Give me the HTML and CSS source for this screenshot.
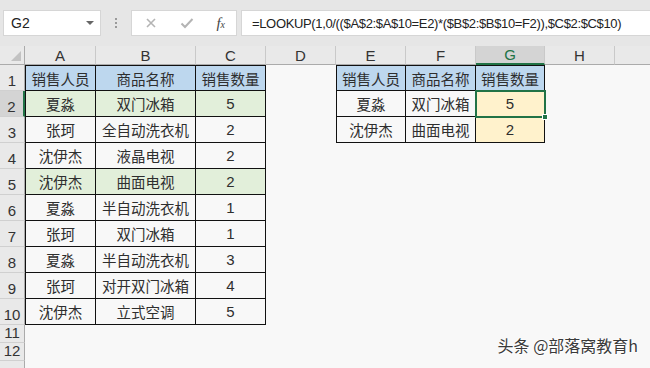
FILE: index.html
```html
<!DOCTYPE html>
<html lang="zh-CN">
<head>
  <meta charset="UTF-8" />
  <title>LOOKUP 多条件查找</title>
  <link rel="stylesheet" href="styles.css">
</head>
<body>
<div class="app">
  <div class="toolbar">
    <div class="name-box">
      <span>G2</span>
      <span class="drop"></span>
    </div>
    <div class="grip"><i></i><i></i><i></i></div>
    <div class="fx-buttons">
      <svg class="btn-icon" viewBox="0 0 12 12"><path d="M2 2l8 8M10 2l-8 8"/></svg>
      <svg class="btn-icon" viewBox="0 0 14 12"><path d="M1.5 6.5l3.5 3.5 7.5-8"/></svg>
      <span class="fx">f<sub>x</sub></span>
    </div>
    <div class="formula">=LOOKUP(1,0/(($A$2:$A$10=E2)*($B$2:$B$10=F2)),$C$2:$C$10)</div>
  </div>

  <div class="sheet">
    <div class="corner"><span class="tri"></span></div>
    <div class="ch">A</div><div class="ch">B</div><div class="ch">C</div><div class="ch">D</div>
    <div class="ch">E</div><div class="ch">F</div><div class="ch sel">G</div><div class="ch">H</div><div class="ch"></div>

    <div class="rh">1</div>
    <div class="c t l tp hd">销售人员</div><div class="c t tp hd">商品名称</div><div class="c t tp hd">销售数量</div>
    <div class="c"></div>
    <div class="c t l tp hd">销售人员</div><div class="c t tp hd">商品名称</div><div class="c t tp hd">销售数量</div>
    <div class="c"></div><div class="c"></div>

    <div class="rh sel">2</div>
    <div class="c t l gr">夏淼</div><div class="c t gr">双门冰箱</div><div class="c t n gr">5</div>
    <div class="c"></div>
    <div class="c t l">夏淼</div><div class="c t">双门冰箱</div><div class="c t n yl active">5</div>
    <div class="c"></div><div class="c"></div>

    <div class="rh">3</div>
    <div class="c t l">张珂</div><div class="c t">全自动洗衣机</div><div class="c t n">2</div>
    <div class="c"></div>
    <div class="c t l">沈伊杰</div><div class="c t">曲面电视</div><div class="c t n yl">2</div>
    <div class="c"></div><div class="c"></div>

    <div class="rh">4</div>
    <div class="c t l">沈伊杰</div><div class="c t">液晶电视</div><div class="c t n">2</div>
    <div class="c"></div><div class="c"></div><div class="c"></div><div class="c"></div><div class="c"></div><div class="c"></div>

    <div class="rh">5</div>
    <div class="c t l gr">沈伊杰</div><div class="c t gr">曲面电视</div><div class="c t n gr">2</div>
    <div class="c"></div><div class="c"></div><div class="c"></div><div class="c"></div><div class="c"></div><div class="c"></div>

    <div class="rh">6</div>
    <div class="c t l">夏淼</div><div class="c t">半自动洗衣机</div><div class="c t n">1</div>
    <div class="c"></div><div class="c"></div><div class="c"></div><div class="c"></div><div class="c"></div><div class="c"></div>

    <div class="rh">7</div>
    <div class="c t l">张珂</div><div class="c t">双门冰箱</div><div class="c t n">1</div>
    <div class="c"></div><div class="c"></div><div class="c"></div><div class="c"></div><div class="c"></div><div class="c"></div>

    <div class="rh">8</div>
    <div class="c t l">夏淼</div><div class="c t">半自动洗衣机</div><div class="c t n">3</div>
    <div class="c"></div><div class="c"></div><div class="c"></div><div class="c"></div><div class="c"></div><div class="c"></div>

    <div class="rh">9</div>
    <div class="c t l">张珂</div><div class="c t">对开双门冰箱</div><div class="c t n">4</div>
    <div class="c"></div><div class="c"></div><div class="c"></div><div class="c"></div><div class="c"></div><div class="c"></div>

    <div class="rh">10</div>
    <div class="c t l">沈伊杰</div><div class="c t">立式空调</div><div class="c t n">5</div>
    <div class="c"></div><div class="c"></div><div class="c"></div><div class="c"></div><div class="c"></div><div class="c"></div>

    <div class="rh">11</div>
    <div class="c"></div><div class="c"></div><div class="c"></div><div class="c"></div><div class="c"></div><div class="c"></div><div class="c"></div><div class="c"></div><div class="c"></div>

    <div class="rh">12</div>
    <div class="c"></div><div class="c"></div><div class="c"></div><div class="c"></div><div class="c"></div><div class="c"></div><div class="c"></div><div class="c"></div><div class="c"></div>

    <div class="rh"></div>
    <div class="c"></div><div class="c"></div><div class="c"></div><div class="c"></div><div class="c"></div><div class="c"></div><div class="c"></div><div class="c"></div><div class="c"></div>
  </div>

  <div class="watermark">头条 @部落窝教育h</div>
</div>
</body>
</html>
```

FILE: styles.css
```css
:root {
  --bar-bg: #e6e6e6;
  --head-bg: #e9e9e9;
  --head-line: #c9c9c9;
  --sheet-bg: #f8f8f8;
  --text: #2e2e2e;
  --excel-green: #217346;
  --cjk: "Noto Sans CJK SC", "Noto Sans", sans-serif;
  --latin: "Liberation Sans", Arial, sans-serif;
}

*, *::before, *::after { box-sizing: border-box; }

body {
  margin: 0;
  background: var(--sheet-bg);
  font-family: var(--cjk);
  color: var(--text);
}

.app {
  position: relative;
  width: 650px;
  height: 368px;
  overflow: hidden;
}

/* formula bar */
.toolbar {
  display: flex;
  align-items: flex-start;
  height: 46px;
  padding: 10px 0 0 3px;
  background: var(--bar-bg);
}

.name-box {
  display: flex;
  align-items: center;
  justify-content: space-between;
  width: 98px;
  height: 26px;
  padding: 0 6px 0 7px;
  background: #fff;
  border: 1px solid #d6d6d6;
  font-family: var(--latin);
  font-size: 14px;
  color: #222;
}

.drop {
  width: 0;
  height: 0;
  border-left: 4px solid transparent;
  border-right: 4px solid transparent;
  border-top: 4px solid #666;
}

.grip {
  display: flex;
  flex-direction: column;
  align-items: center;
  justify-content: center;
  gap: 2px;
  width: 30px;
  height: 26px;
}

.grip i {
  width: 2px;
  height: 2px;
  background: #9a9a9a;
}

.fx-buttons {
  display: flex;
  align-items: center;
  justify-content: space-between;
  width: 106px;
  height: 26px;
  padding: 0 11px 0 13px;
  background: #fff;
  border: 1px solid #d6d6d6;
}

.btn-icon {
  width: 12px;
  height: 12px;
  fill: none;
  stroke: #b4b4b4;
  stroke-width: 1.6;
}

.btn-icon:nth-child(2) { width: 14px; stroke-width: 2; }

.fx {
  font-family: "Liberation Serif", serif;
  font-style: italic;
  font-size: 15px;
  color: #444;
}

.fx sub {
  font-size: 10px;
  vertical-align: 0;
}

.formula {
  flex: 1;
  height: 26px;
  margin-left: 4px;
  padding: 0 0 0 10px;
  display: flex;
  align-items: center;
  background: #fff;
  border: 1px solid #d6d6d6;
  border-right: none;
  font-family: var(--latin);
  font-size: 13px;
  letter-spacing: -0.35px;
  color: #222;
  white-space: nowrap;
}

/* grid */
.sheet {
  display: grid;
  grid-template-columns: 25px 71px 100px 70px 70px 70px 70px 69px 70px 70px;
  grid-template-rows: 19px repeat(10, 26px) 18px 18px 26px;
  background: var(--sheet-bg);
}

.corner {
  position: relative;
  background: var(--head-bg);
  border-right: 1px solid #ababab;
  border-bottom: 1px solid #ababab;
}

.tri {
  position: absolute;
  right: 3px;
  bottom: 3px;
  width: 0;
  height: 0;
  border-left: 10px solid transparent;
  border-bottom: 10px solid #c2c2c2;
}

.ch {
  display: flex;
  align-items: center;
  justify-content: center;
  background: var(--head-bg);
  border-right: 1px solid var(--head-line);
  border-bottom: 1px solid #ababab;
  font-family: var(--latin);
  font-size: 15px;
  color: #333;
}

.ch.sel {
  background: #d4d4d4;
  color: var(--excel-green);
  border-bottom: 2px solid var(--excel-green);
}

.rh {
  display: flex;
  align-items: flex-end;
  justify-content: center;
  padding-bottom: 2px;
  background: var(--head-bg);
  border-right: 1px solid #ababab;
  border-bottom: 1px solid #d0d0d0;
  font-family: var(--latin);
  font-size: 15px;
  line-height: 1;
  color: #333;
}

.rh.sel {
  background: #d4d4d4;
  border-right: 2px solid var(--excel-green);
}

.c {
  display: flex;
  align-items: center;
  justify-content: center;
  font-size: 14.5px;
  white-space: nowrap;
}

.c.t {
  border-right: 1px solid #111;
  border-bottom: 1px solid #111;
}

.c.l { border-left: 1px solid #111; }
.c.tp { border-top: 1px solid #111; }

.c.n {
  font-family: var(--latin);
  font-size: 15px;
}

.hd { background: #bdd7ee; }
.gr { background: #e2efda; }
.yl { background: #fff2cc; }

.active {
  position: relative;
  outline: 2px solid var(--excel-green);
  outline-offset: -1px;
}

.active::after {
  content: "";
  position: absolute;
  right: -4px;
  bottom: -4px;
  width: 6px;
  height: 6px;
  background: var(--excel-green);
  border: 1px solid #fff;
}

.watermark {
  position: absolute;
  right: 12px;
  bottom: 11px;
  font-size: 16px;
  color: #3a3a3a;
  text-shadow: 0 0 2px #fff, 0 0 2px #fff, 1px 1px 0 #fff;
}
```
